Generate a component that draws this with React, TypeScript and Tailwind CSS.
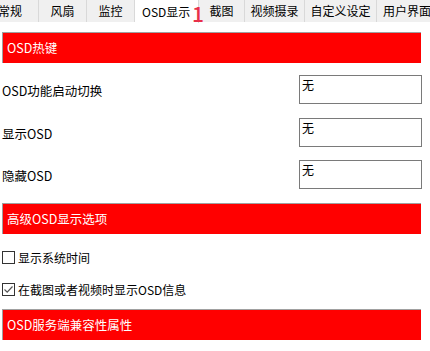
import React from "react";

const tabs = [
  { name: "常规", w: "w-[39px]", pad: "justify-end pr-[16px]" },
  { name: "风扇", w: "w-[48px]", pad: "justify-center" },
  { name: "监控", w: "w-[48px]", pad: "justify-center" },
  { name: "OSD显示", w: "w-[64px]", pad: "justify-start pl-[7px]", active: true },
  { name: "截图", w: "w-[46px]", pad: "justify-center" },
  { name: "视频摄录", w: "w-[60px]", pad: "justify-center" },
  { name: "自定义设定", w: "w-[72px]", pad: "justify-center" },
  { name: "用户界面", w: "w-[60px]", pad: "justify-start pl-[6px]" },
];

const font = { fontFamily: '"Segoe UI", "Noto Sans CJK SC", "Noto Sans", sans-serif' };

const Header = ({ title, mt }: { title: string; mt: string }) => (
  <div
    className={`${mt} h-[31px] w-[419px] bg-[#ff0000] border-t border-l border-[#a0a0a0] flex items-center pl-[4px] text-white text-[12.5px]`}
  >
    {title}
  </div>
);

const HotkeyRow = ({ label, mt }: { label: string; mt: string }) => (
  <div className={`${mt} flex items-center h-[29px]`}>
    <span className="w-[297px] text-[12.5px] text-black pt-[3px]">{label}</span>
    <div className="w-[123px] h-[29px] border border-[#7a7a7a] bg-white text-[12px] text-black pl-[2px] leading-[18px]">
      无
    </div>
  </div>
);

const Check = ({ label, checked, mt }: { label: string; checked?: boolean; mt: string }) => (
  <div className={`${mt} flex items-center h-[13px]`}>
    <div className="w-[13px] h-[13px] border border-[#333333] bg-white flex items-center justify-center">
      {checked && (
        <svg width="11" height="11" viewBox="0 0 11 11">
          <path d="M1.5 5.5 L4.2 8.2 L9.5 2.5" fill="none" stroke="#555555" strokeWidth="1.2" />
        </svg>
      )}
    </div>
    <span className="ml-[3px] text-[12px] text-black">{label}</span>
  </div>
);

export default function App() {
  return (
    <div className="w-[430px] h-[351px] bg-white overflow-hidden relative" style={font}>
      <div className="flex h-[22px] border-b border-[#d9d9d9] bg-white">
        {tabs.map((t) => (
          <div
            key={t.name}
            className={`${t.w} shrink-0 flex items-center ${t.pad} text-[12px] text-black border-r border-[#d9d9d9] whitespace-nowrap ${
              t.active ? "bg-white h-[23px]" : "bg-[#f0f0f0] h-[22px]"
            }`}
          >
            {t.name}
          </div>
        ))}
      </div>
      <span className="absolute left-[192px] top-[3px] text-[#e8304a] text-[21px] font-medium leading-[21px] z-10">
        1
      </span>
      <div className="pl-[2px]">
        <Header title="OSD热键" mt="mt-[10px]" />
        <HotkeyRow label="OSD功能启动切换" mt="mt-[12px]" />
        <HotkeyRow label="显示OSD" mt="mt-[14px]" />
        <HotkeyRow label="隐藏OSD" mt="mt-[13px]" />
        <Header title="高级OSD显示选项" mt="mt-[14px]" />
        <Check label="显示系统时间" mt="mt-[17px]" />
        <Check label="在截图或者视频时显示OSD信息" checked mt="mt-[19px]" />
        <Header title="OSD服务端兼容性属性" mt="mt-[13px]" />
      </div>
    </div>
  );
}
